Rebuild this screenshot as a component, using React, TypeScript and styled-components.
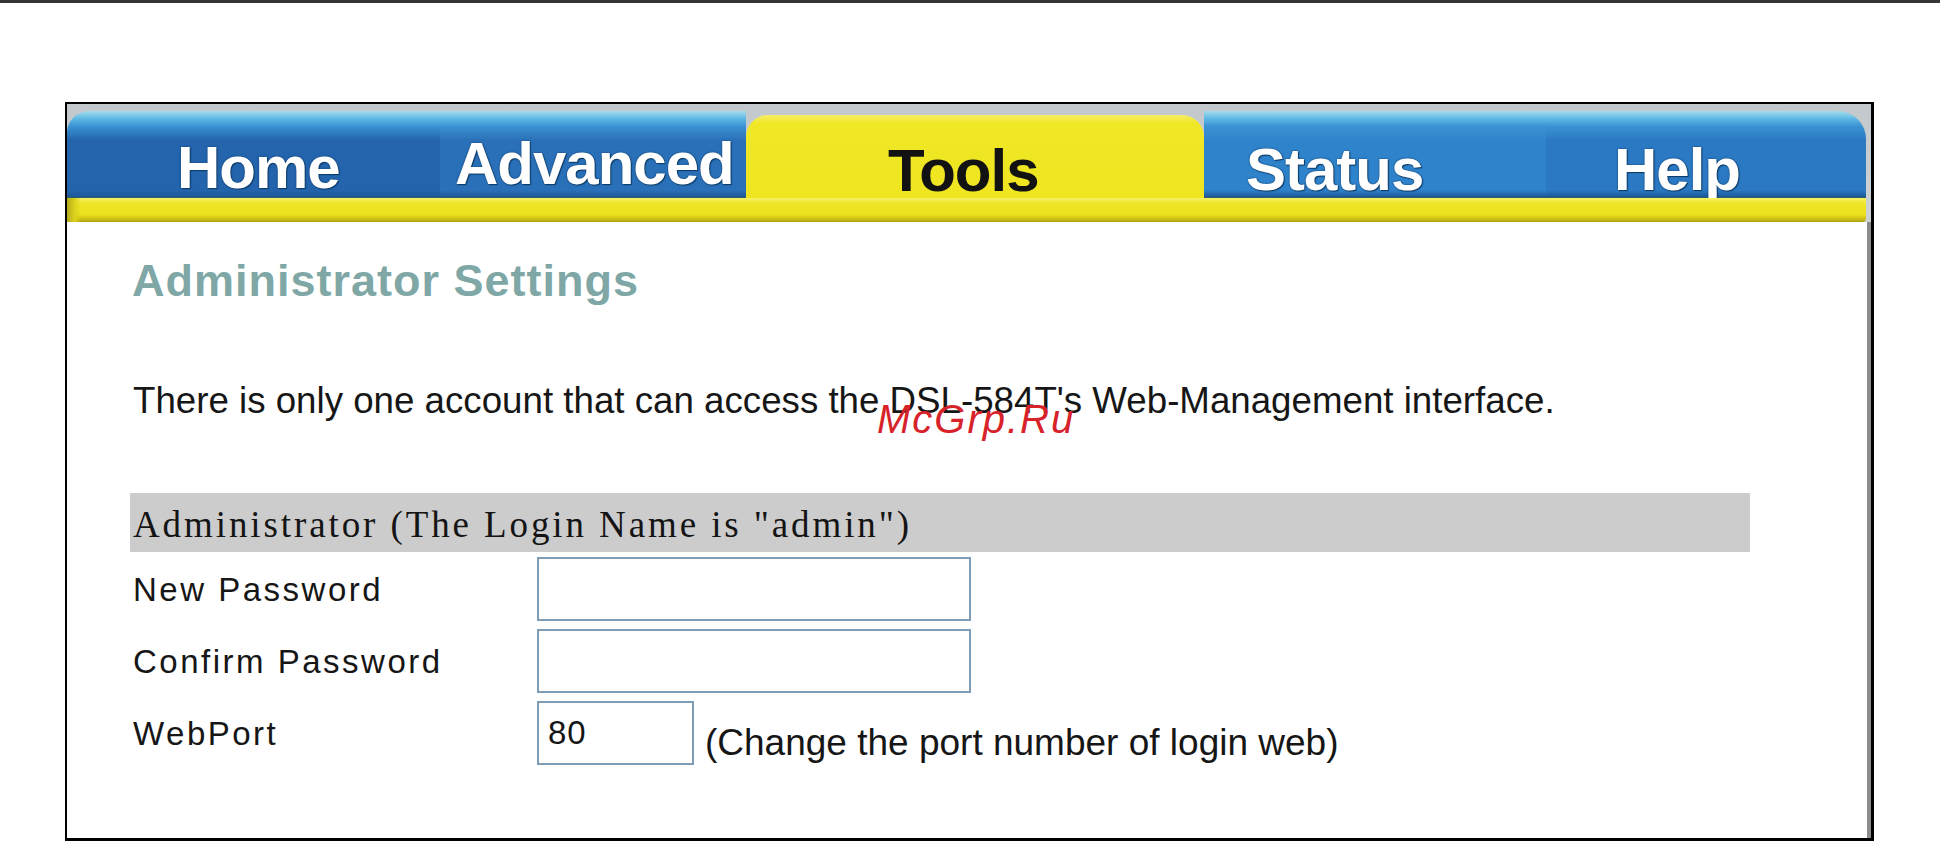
import styled, { createGlobalStyle } from "styled-components";

const GlobalStyle = createGlobalStyle`
  html, body {
    margin: 0;
    padding: 0;
    background: #ffffff;
  }
  body {
    width: 1940px;
    height: 841px;
    overflow: hidden;
    font-family: "Liberation Sans", Arial, sans-serif;
  }
`;

type TabInfo = {
  label: string;
  width: number;
  pad: number;
  lift: number;
  shade: string;
  active?: boolean;
  round?: "left" | "right";
};

const tabs: TabInfo[] = [
  { label: "Home", width: 373, pad: 110, lift: 2, shade: "#2464ac", round: "left" },
  { label: "Advanced", width: 306, pad: 15, lift: 6, shade: "#2a70b8" },
  { label: "Tools", width: 458, pad: 142, lift: 0, shade: "#efe620", active: true },
  { label: "Status", width: 342, pad: 42, lift: 0, shade: "#2f83cb" },
  { label: "Help", width: 320, pad: 68, lift: 0, shade: "#2b79c3", round: "right" },
];

function App() {
  return (
    <>
      <GlobalStyle />
      <TopRule />
      <Frame>
        <TabBar>
          <TabRow>
            {tabs.map((t) => (
              <Tab
                key={t.label}
                $w={t.width}
                $pad={t.pad}
                $lift={t.lift}
                $shade={t.shade}
                $active={t.active}
                $round={t.round}
              >
                {t.label}
              </Tab>
            ))}
          </TabRow>
          <Strip />
        </TabBar>
        <Body>
          <Content>
            <Heading>Administrator Settings</Heading>
            <Intro>
              There is only one account that can access the DSL-584T's
              Web-Management interface.
            </Intro>
            <Watermark>McGrp.Ru</Watermark>
            <SectionBar>Administrator (The Login Name is "admin")</SectionBar>
            <Form>
              <FieldRow>
                <Label>New Password</Label>
                <TextBox type="password" $w={434} />
              </FieldRow>
              <FieldRow>
                <Label>Confirm Password</Label>
                <TextBox type="password" $w={434} />
              </FieldRow>
              <FieldRow>
                <Label>WebPort</Label>
                <TextBox type="text" $w={157} defaultValue="80" />
                <Hint>(Change the port number of login web)</Hint>
              </FieldRow>
            </Form>
          </Content>
        </Body>
      </Frame>
    </>
  );
}

const TopRule = styled.div`
  height: 3px;
  background: #353535;
`;

const Frame = styled.div`
  box-sizing: border-box;
  margin: 99px 0 0 65px;
  width: 1809px;
  height: 739px;
  border: 2px solid #000;
  border-right-width: 3px;
  border-bottom-width: 3px;
  display: flex;
  flex-direction: column;
  overflow: hidden;
`;

const TabBar = styled.div`
  background: linear-gradient(180deg, #c2c8cc 0%, #cdd2d5 100%);
  display: flex;
  flex-direction: column;
`;

const TabRow = styled.div`
  height: 94px;
  display: flex;
  align-items: flex-end;
`;

const Tab = styled.div<{
  $w: number;
  $pad: number;
  $lift: number;
  $shade: string;
  $active?: boolean;
  $round?: "left" | "right";
}>`
  box-sizing: border-box;
  width: ${(p) => p.$w}px;
  height: ${(p) => (p.$active ? 83 : 87)}px;
  padding-left: ${(p) => p.$pad}px;
  padding-bottom: ${(p) => p.$lift}px;
  display: flex;
  align-items: flex-end;
  font-family: "Liberation Sans", Arial, sans-serif;
  font-weight: bold;
  font-size: 60px;
  line-height: 54px;
  letter-spacing: -1px;
  color: ${(p) => (p.$active ? "#121212" : "#ffffff")};
  text-shadow: ${(p) =>
    p.$active ? "none" : "0 0 2px #0c3a66, 1px 1px 1px #0c3a66"};
  background: ${(p) =>
    p.$active
      ? `linear-gradient(180deg, #f5ee66 0%, #f0e726 10%, ${p.$shade} 100%)`
      : `linear-gradient(180deg, #a6dcea 0%, #5db8e4 9%, #3a92d2 18%, ${p.$shade} 34%, ${p.$shade} 92%, #1d5798 100%)`};
  border-radius: ${(p) =>
    p.$active
      ? "22px 22px 0 0"
      : p.$round === "left"
      ? "22px 0 0 0"
      : p.$round === "right"
      ? "0 28px 0 0"
      : "0"};
  border-bottom: ${(p) => (p.$active ? "none" : "1px solid #2f5e6a")};
`;

const Strip = styled.div`
  width: 1799px;
  height: 24px;
  background: linear-gradient(90deg, #b5ab1c 0px, #dcd31e 8px, transparent 14px),
    linear-gradient(180deg, #f6f06a 0%, #f0e62a 22%, #ebe01a 70%, #c4b414 92%, #a89a10 100%);
  border-radius: 0 0 4px 0;
`;

const Body = styled.div`
  flex: 1;
  display: flex;
  background: #ffffff;
  border-right: 4px solid #8c8c8c;
`;

const Content = styled.div`
  position: relative;
  flex: 1;
  padding: 36px 0 0 65px;
  color: #161616;
`;

const Heading = styled.h1`
  margin: 0;
  font-family: "Liberation Sans", Arial, sans-serif;
  font-weight: bold;
  font-size: 45px;
  line-height: 45px;
  letter-spacing: 1px;
  color: #7fa7a6;
`;

const Intro = styled.p`
  margin: 79px 0 0 1px;
  font-size: 36.7px;
  line-height: 37px;
  white-space: nowrap;
`;

const Watermark = styled.span`
  position: absolute;
  left: 810px;
  top: 177px;
  font-family: "Liberation Sans", Arial, sans-serif;
  font-style: italic;
  font-size: 40px;
  line-height: 40px;
  letter-spacing: 2px;
  color: #d8222a;
`;

const SectionBar = styled.div`
  box-sizing: border-box;
  margin: 74px 0 0 -2px;
  width: 1620px;
  height: 59px;
  padding: 13px 0 0 3px;
  background: #cccccc;
  font-family: "Liberation Serif", "Times New Roman", serif;
  font-size: 37px;
  line-height: 37px;
  letter-spacing: 2.9px;
  color: #141414;
  white-space: nowrap;
`;

const Form = styled.div`
  margin-top: 5px;
  display: flex;
  flex-direction: column;
  gap: 8px;
`;

const FieldRow = styled.div`
  display: flex;
  align-items: center;
  height: 64px;
`;

const Label = styled.span`
  width: 405px;
  padding-left: 1px;
  box-sizing: border-box;
  font-size: 33px;
  line-height: 33px;
  letter-spacing: 2.5px;
  white-space: nowrap;
`;

const TextBox = styled.input<{ $w: number }>`
  box-sizing: border-box;
  width: ${(p) => p.$w}px;
  height: 64px;
  margin: 0;
  padding: 0 0 0 9px;
  border: 2px solid #7f9db9;
  background: #ffffff;
  font-family: "Liberation Sans", Arial, sans-serif;
  font-size: 33px;
  letter-spacing: 1px;
  color: #151515;
  outline: none;
`;

const Hint = styled.span`
  align-self: flex-start;
  margin: 23px 0 0 11px;
  font-size: 37px;
  line-height: 37px;
  white-space: nowrap;
`;

export default App;
